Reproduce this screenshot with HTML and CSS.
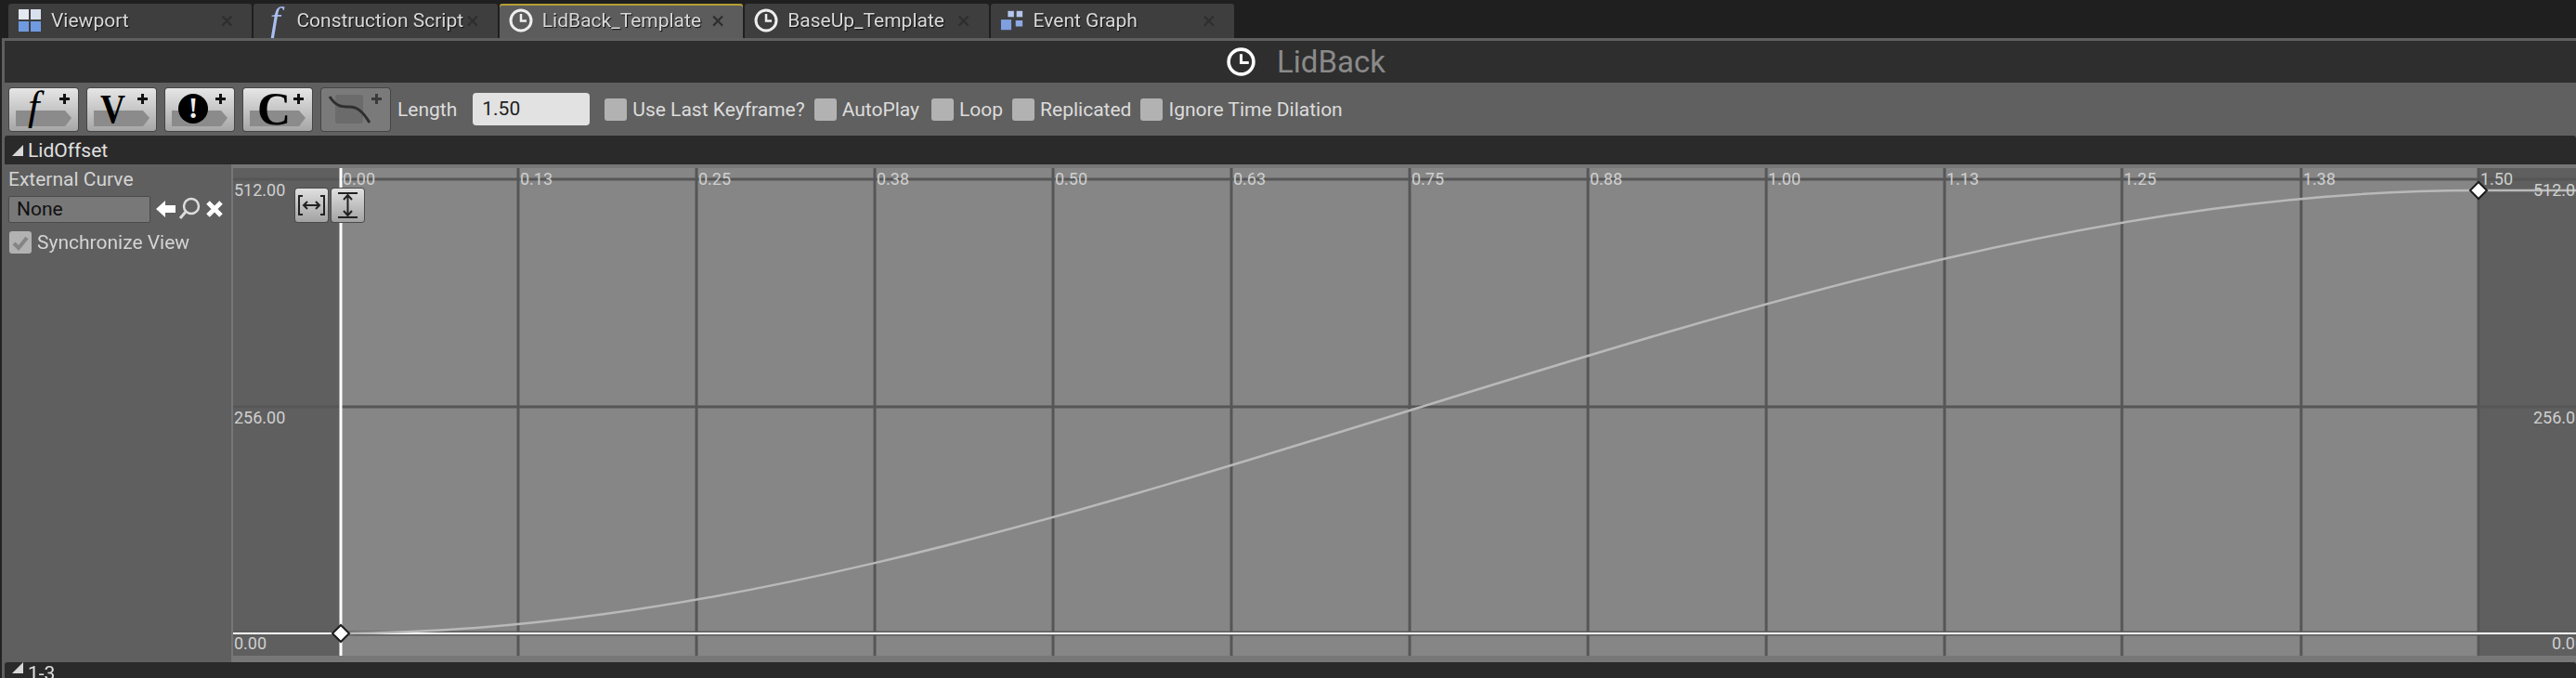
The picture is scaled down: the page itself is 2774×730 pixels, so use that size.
FILE: index.html

```html
<!DOCTYPE html>
<html lang="en">
<head>
  <meta charset="UTF-8">
  <title>LidBack</title>
  <link rel="stylesheet" href="styles.css">
</head>
<body>
  <div class="tabs">
    <div class="tab">
      <svg class="tab-icon" viewBox="0 0 26 26"><rect x="1" y="1" width="11" height="11" fill="#e4e8f0"/><rect x="14" y="1" width="11" height="11" fill="#d8e0ee"/><rect x="1" y="14" width="11" height="11" fill="#6f9ae0"/><rect x="14" y="14" width="11" height="11" fill="#6f9ae0"/></svg>
      <span class="tab-label">Viewport</span><span class="tab-close">×</span>
    </div>
    <div class="tab">
      <span class="tab-icon func-icon">f</span>
      <span class="tab-label">Construction Script</span><span class="tab-close">×</span>
    </div>
    <div class="tab active">
      <svg class="tab-icon" viewBox="0 0 26 26"><circle cx="13" cy="13" r="11" fill="none" stroke="#eee" stroke-width="3"/><path d="M13 6v7.500h6" fill="none" stroke="#eee" stroke-width="2.500"/></svg>
      <span class="tab-label">LidBack_Template</span><span class="tab-close">×</span>
    </div>
    <div class="tab">
      <svg class="tab-icon" viewBox="0 0 26 26"><circle cx="13" cy="13" r="11" fill="none" stroke="#eee" stroke-width="3"/><path d="M13 6v7.500h6" fill="none" stroke="#eee" stroke-width="2.500"/></svg>
      <span class="tab-label">BaseUp_Template</span><span class="tab-close">×</span>
    </div>
    <div class="tab">
      <svg class="tab-icon" viewBox="0 0 28 26"><rect x="9" y="2" width="7" height="7" fill="#b4c6ec"/><rect x="19" y="2" width="7" height="7" fill="#b4c6ec"/><rect x="1" y="12" width="12" height="12" fill="#7f9fe0"/><rect x="18" y="13" width="8" height="7" fill="#8eaae4"/></svg>
      <span class="tab-label">Event Graph</span><span class="tab-close">×</span>
    </div>
  </div>

  <div class="panel">
    <div class="title-bar">
      <svg class="title-icon" viewBox="0 0 32 32"><circle cx="16" cy="16" r="13" fill="none" stroke="#fff" stroke-width="3.500"/><path d="M16 8v9h8" fill="none" stroke="#fff" stroke-width="3"/></svg>
      <span class="title-text">LidBack</span>
    </div>

    <div class="toolbar">
      <div class="tool-btn">
        <svg viewBox="0 0 74 46"><path class="btn-tag" d="M7 24H60L67 32L60 41H7Z"/><text class="btn-f" x="20" y="34">f</text><path class="btn-plus" d="M58 6h3v4h4v3h-4v4h-3v-4h-4v-3h4z"/></svg>
      </div>
      <div class="tool-btn">
        <svg viewBox="0 0 74 46"><path class="btn-tag" d="M7 24H60L67 32L60 41H7Z"/><text class="btn-v" transform="translate(14 37) scale(.85 1)">V</text><path class="btn-plus" d="M58 6h3v4h4v3h-4v4h-3v-4h-4v-3h4z"/></svg>
      </div>
      <div class="tool-btn">
        <svg viewBox="0 0 74 46"><path class="btn-tag" d="M7 24H60L67 32L60 41H7Z"/><circle cx="30" cy="22" r="16"/><text class="btn-bang" x="30" y="32">!</text><path class="btn-plus" d="M58 6h3v4h4v3h-4v4h-3v-4h-4v-3h4z"/></svg>
      </div>
      <div class="tool-btn">
        <svg viewBox="0 0 74 46"><path class="btn-tag" d="M7 24H60L67 32L60 41H7Z"/><text class="btn-c" x="15" y="39">C</text><path class="btn-plus" d="M58 6h3v4h4v3h-4v4h-3v-4h-4v-3h4z"/></svg>
      </div>
      <div class="tool-btn off">
        <svg viewBox="0 0 74 46"><rect x="15" y="7" width="30" height="31" rx="3" fill="#6b6b6b"/><path d="M9 9C16 20 22 20 30 20S44 24 52 37" fill="none" stroke="#2f2f2f" stroke-width="3"/><path class="btn-plus dim" d="M58 6h3v4h4v3h-4v4h-3v-4h-4v-3h4z"/></svg>
      </div>
      <span class="length-label">Length</span>
      <div class="length-input">1.50</div>
      <label class="check"><span class="box"></span>Use Last Keyframe?</label>
      <label class="check autoplay"><span class="box"></span>AutoPlay</label>
      <label class="check"><span class="box"></span>Loop</label>
      <label class="check"><span class="box"></span>Replicated</label>
      <label class="check"><span class="box"></span>Ignore Time Dilation</label>
    </div>

    <div class="track-header"><span class="arrow"></span>LidOffset</div>

    <div class="track-body">
      <div class="track-side">
        <div class="side-label">External Curve</div>
        <div class="curve-row">
          <div class="curve-input">None</div>
          <svg class="curve-tool" viewBox="0 0 76 30">
            <path d="M1 15L11 6V11H22V19H11V24Z" fill="#fff"/>
            <circle cx="39" cy="12" r="8" fill="none" stroke="#ddd" stroke-width="2.500"/><path d="M33 18L27 25" stroke="#ddd" stroke-width="3"/>
            <path d="M57 8L71 22M71 8L57 22" stroke="#fff" stroke-width="5"/>
          </svg>
        </div>
        <label class="check sync">
          <span class="box"><svg viewBox="0 0 24 24"><path d="M5 13L10 18L19 7" fill="none" stroke="#858585" stroke-width="4"/></svg></span>Synchronize View
        </label>
      </div>

      <div class="track-canvas">
        <svg class="canvas-svg" viewBox="249 177 2525 536">
          <rect class="band" x="249" y="177" width="2525" height="536"/>
          <rect class="outside" x="251" y="181" width="116" height="525"/>
          <rect class="inside" x="367" y="181" width="2302" height="525"/>
          <rect class="outside" x="2669" y="181" width="105" height="525"/>
          <g class="grid">
            <path d="M558 181V706M750 181V706M942 181V706M1134 181V706M1326 181V706M1518 181V706M1710 181V706M1902 181V706M2094 181V706M2285 181V706M2478 181V706M2669 181V706"/>
            <path d="M251 193H2774"/>
            <path d="M251 438H2774"/>
          </g>
          <path class="zero-edge" d="M251 682H2774"/>
          <path class="zero-line" d="M251 682H2774"/>
          <path class="curve" d="M367 682C1134 679 1902 204 2669 205H2774"/>
          <path class="playhead" d="M367 181V706"/>
          <path class="key" d="M2669 196L2678 205L2669 214L2660 205Z"/>
          <path class="key" d="M367 673L376 682L367 691L358 682Z"/>
          <g class="labels">
            <text x="369" y="199">0.00</text><text x="560" y="199">0.13</text><text x="752" y="199">0.25</text>
            <text x="944" y="199">0.38</text><text x="1136" y="199">0.50</text><text x="1328" y="199">0.63</text>
            <text x="1520" y="199">0.75</text><text x="1712" y="199">0.88</text><text x="1904" y="199">1.00</text>
            <text x="2096" y="199">1.13</text><text x="2287" y="199">1.25</text><text x="2480" y="199">1.38</text>
            <text x="2671" y="199">1.50</text>
            <text x="252" y="211">512.00</text><text x="252" y="456">256.00</text><text x="252" y="699">0.00</text>
            <text x="2728" y="211">512.00</text><text x="2728" y="456">256.00</text><text x="2748" y="699">0.00</text>
          </g>
        </svg>
        <div class="fit-btns">
          <div class="fit-btn"><svg viewBox="0 0 35 36"><path d="M8 8H4V28H8M27 8H31V28H27M9 18H26M13 14L9 18L13 22M22 14L26 18L22 22" fill="none" stroke="#222" stroke-width="2"/></svg></div>
          <div class="fit-btn"><svg viewBox="0 0 35 36"><path d="M7 5H28M7 31H28M17.500 7V29M13 12L17.500 7L22 12M13 24L17.500 29L22 24" fill="none" stroke="#222" stroke-width="2"/></svg></div>
        </div>
      </div>
    </div>

    <div class="track-header next"><span class="arrow"></span>1-3</div>
  </div>
</body>
</html>
```

FILE: styles.css

```css
html, body {
  margin: 0;
  padding: 0;
  width: 2774px;
  height: 730px;
  overflow: hidden;
  background-color: #222;
  font-family: Roboto, "Liberation Sans", sans-serif;
  font-size: 21px;
  color: #ddd;
}
svg { display: block; }

/* the source capture is soft, an upscaled window */
.tabs, .panel {
  filter: blur(0.6px);
}

/* tab strip */
.tabs {
  display: flex;
  gap: 2px;
  height: 37px;
  padding: 4px 0 0 9px;
  background-color: #1f1f1f;
}
.tab {
  display: flex;
  align-items: center;
  width: 262.4px;
  height: 37px;
  box-sizing: border-box;
  padding: 0 20px 2px 10px;
  background-color: #3e3e3e;
  border-radius: 3px 3px 0 0;
}
.tab.active {
  background-color: #5c5c5c;
  box-shadow: inset 0 2px 0 #b59f35;
}
.tab-icon {
  width: 26px;
  height: 26px;
  margin-right: 10px;
  flex: none;
}
.func-icon {
  font-family: "Liberation Serif", serif;
  font-style: italic;
  font-size: 40px;
  line-height: 26px;
  color: #a9bdf0;
  text-align: center;
}
.tab-label {
  color: #d8d8d8;
  text-shadow: 1px 1px 1px #111;
  white-space: nowrap;
}
.tab-close {
  margin-left: auto;
  font-size: 26px;
  line-height: 26px;
  color: #2e2e2e;
}

/* main panel */
.panel {
  margin-left: 2px;
  padding: 3px 0 0 3px;
  background-color: #5f5f5f;
}
.title-bar {
  display: flex;
  align-items: center;
  justify-content: center;
  gap: 22px;
  height: 45px;
  padding-left: 33px;
  background-color: #2e2e2e;
}
.title-icon {
  width: 33px;
  height: 33px;
}
.title-text {
  font-size: 33px;
  color: #8a8a8a;
}

/* toolbar */
.toolbar {
  display: flex;
  align-items: center;
  height: 57px;
  padding-left: 5px;
  background-color: #606060;
}
.tool-btn {
  width: 74px;
  height: 46px;
  margin-right: 10px;
  box-sizing: border-box;
  border-radius: 3px;
  background: linear-gradient(#e6e6e6, #a6a6a6);
  box-shadow: 0 0 0 1px #454545;
}
.tool-btn svg {
  width: 74px;
  height: 46px;
  overflow: visible;
}
.tool-btn.off {
  background: #7a7a7a;
}
.btn-tag { fill: #8b8b8b; }
.btn-plus { fill: #111; }
.btn-plus.dim { fill: #3a3a3a; }
.btn-f, .btn-v, .btn-c, .btn-bang {
  font-family: "Liberation Serif", serif;
  fill: #000;
}
.btn-f { font-size: 45px; font-style: italic; }
.btn-v { font-size: 44px; font-weight: bold; }
.btn-c { font-size: 50px; font-weight: bold; }
.btn-bang { font-size: 32px; font-weight: bold; fill: #eee; text-anchor: middle; }

.length-label {
  margin-left: -2px;
  margin-right: 17px;
}
.length-input {
  width: 126px;
  height: 35px;
  box-sizing: border-box;
  padding-left: 10px;
  margin-right: 16px;
  border-radius: 4px;
  background-color: #e2e2e2;
  color: #222;
  line-height: 35px;
}
.check {
  display: flex;
  align-items: center;
  gap: 6px;
  margin-right: 10px;
  color: #dcdcdc;
  white-space: nowrap;
}
.check.autoplay {
  margin-right: 13px;
}
.box {
  width: 24px;
  height: 24px;
  flex: none;
  border-radius: 3px;
  background-color: #b2b2b2;
}

/* track */
.track-header {
  height: 31px;
  display: flex;
  align-items: center;
  padding-left: 8px;
  background-color: #2a2a2a;
  border-radius: 3px 3px 0 0;
  color: #e0e0e0;
}
.arrow {
  width: 0;
  height: 0;
  margin-right: 5px;
  border-style: solid;
  border-width: 0 0 12px 12px;
  border-color: transparent transparent #d8d8d8 transparent;
}
.track-header.next {
  height: 17px;
  align-items: flex-start;
  line-height: 24px;
}
.track-body {
  display: flex;
  height: 536px;
}
.track-side {
  width: 244px;
  flex: none;
  padding: 4px 0 0 4px;
  box-sizing: border-box;
}
.side-label {
  height: 25px;
  line-height: 25px;
  color: #d4d4d4;
}
.curve-row {
  display: flex;
  align-items: center;
  gap: 5px;
  margin-top: 4px;
}
.curve-input {
  width: 153px;
  height: 29px;
  box-sizing: border-box;
  padding-left: 8px;
  background-color: #787878;
  border: 1px solid #4a4a4a;
  border-radius: 2px;
  color: #111;
  line-height: 27px;
}
.curve-tool {
  width: 76px;
  height: 30px;
}
.check.sync {
  margin: 9px 0 0 1px;
  color: #d4d4d4;
}
.track-canvas {
  position: relative;
  flex: 1;
}
.canvas-svg {
  width: 2525px;
  height: 536px;
}
.band { fill: #777; }
.outside { fill: #5f5f5f; }
.inside { fill: #868686; }
.grid path {
  fill: none;
  stroke: #565656;
  stroke-width: 3;
}
.zero-edge {
  stroke: #5c5c5c;
  stroke-width: 5;
}
.zero-line {
  stroke: #fff;
  stroke-width: 2;
}
.curve {
  fill: none;
  stroke: #b9b9b9;
  stroke-width: 2.500;
}
.playhead {
  stroke: #fff;
  stroke-width: 3;
}
.key {
  fill: #fff;
  stroke: #1c1c1c;
  stroke-width: 2;
}
.labels text {
  font-size: 18px;
  fill: #cfcfcf;
}
.fit-btns {
  position: absolute;
  left: 69px;
  top: 26px;
  display: flex;
  gap: 4px;
}
.fit-btn {
  width: 35px;
  height: 36px;
  border-radius: 3px;
  background: linear-gradient(#e0e0e0, #a2a2a2);
  box-shadow: 0 0 0 1px #4a4a4a;
}
```
